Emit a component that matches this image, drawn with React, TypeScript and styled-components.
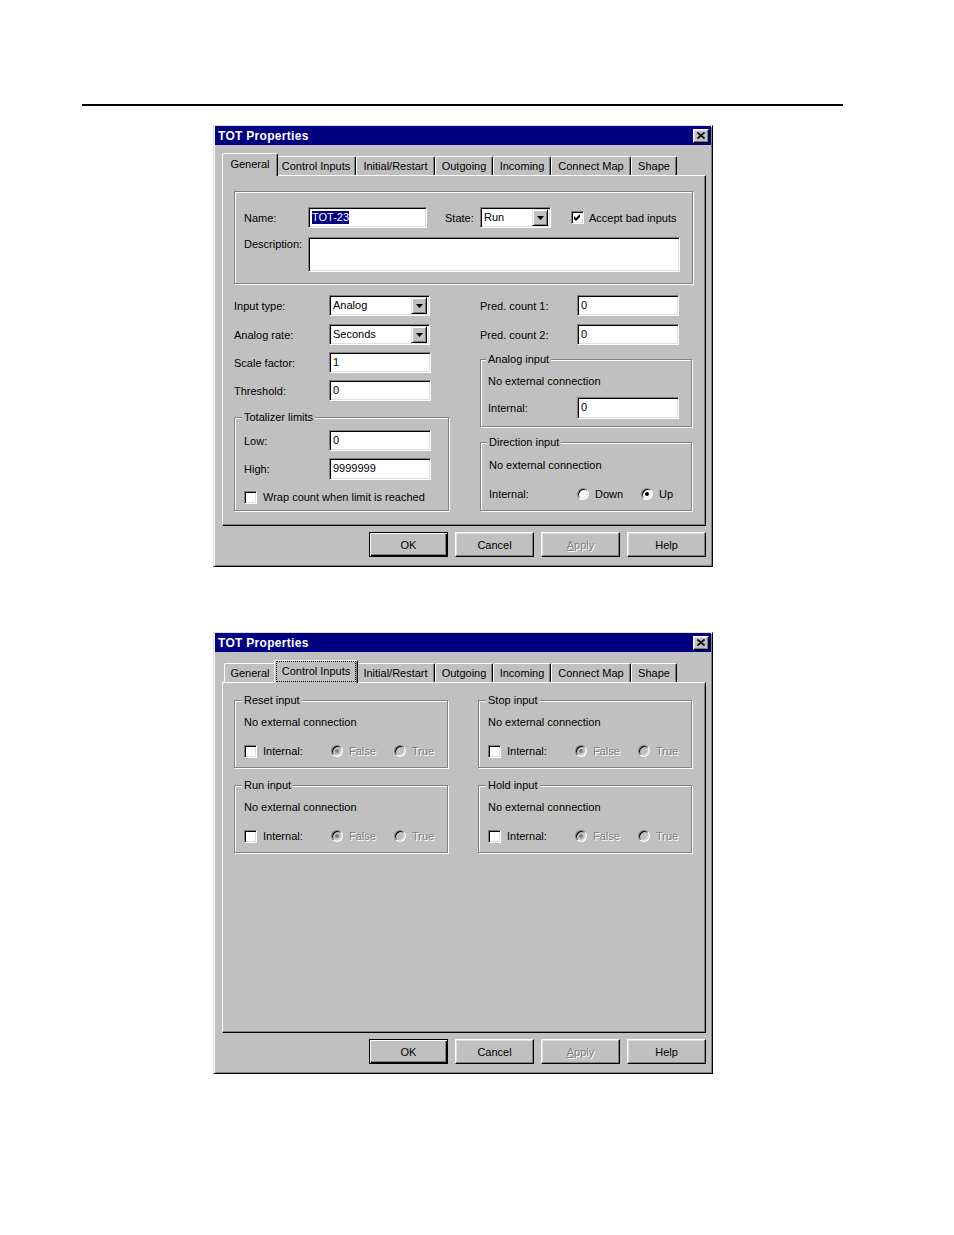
import * as React from 'react';
import styled, { createGlobalStyle } from 'styled-components';

const GlobalStyle = createGlobalStyle`
  html, body {
    margin: 0;
    padding: 0;
    background: #ffffff;
  }
  body {
    font-family: "Liberation Sans", Arial, sans-serif;
  }
`;

const PageElm = styled.div`
  width: 954px;
  min-height: 1235px;
  padding-top: 104px;
  box-sizing: border-box;
`;

const RuleElm = styled.div`
  margin-left: 82px;
  width: 761px;
  height: 2px;
  background: #000;
`;

const SlotElm = styled.div<{ $mt: number }>`
  margin: ${(p) => p.$mt}px 0 0 213px;
`;

// dialog chrome
const FrameElm = styled.div`
  width: 500px;
  height: 442px;
  box-sizing: border-box;
  display: flex;
  flex-direction: column;
  background: #c0c0c0;
  border: 1px solid;
  border-color: #dfdfdf #000 #000 #dfdfdf;
  box-shadow: inset 1px 1px #fff, inset -1px -1px #808080;
  font-size: 11px;
  color: #000;
`;

const TitleBarElm = styled.div`
  height: 19px;
  margin: 0 1px;
  padding: 0 2px 0 3px;
  display: flex;
  align-items: center;
  justify-content: space-between;
  background: #000080;
  color: #fff;
  font-size: 12px;
  font-weight: bold;
  letter-spacing: 0.3px;
`;

const CloseBtnElm = styled.div`
  box-sizing: border-box;
  width: 16px;
  height: 14px;
  display: flex;
  align-items: center;
  justify-content: center;
  background: #c0c0c0;
  border: 1px solid;
  border-color: #fff #000 #000 #fff;
  box-shadow: inset -1px -1px #808080, inset 1px 1px #dfdfdf;
`;

const TabStripElm = styled.div`
  display: flex;
  align-items: flex-end;
  height: 22px;
  margin: 8px 0 0 10px;
`;

const TabElm = styled.div<{ $w: number; $active?: boolean }>`
  position: relative;
  z-index: ${(p) => (p.$active ? 2 : 0)};
  box-sizing: border-box;
  width: ${(p) => p.$w + (p.$active ? 4 : 0)}px;
  height: ${(p) => (p.$active ? 23 : 19)}px;
  margin: 0 ${(p) => (p.$active ? -2 : 0)}px ${(p) => (p.$active ? -1 : 0)}px;
  padding-bottom: ${(p) => (p.$active ? 3 : 0)}px;
  display: flex;
  align-items: center;
  justify-content: center;
  background: #c0c0c0;
  border-top: 1px solid #fff;
  border-left: 1px solid #fff;
  border-right: 1px solid #000;
  border-radius: 2px 2px 0 0;
  box-shadow: inset -1px 0 #808080;
  white-space: nowrap;
`;

const TabFocusElm = styled.span`
  position: absolute;
  inset: 1px 2px 2px 2px;
  outline: 1px dotted #000;
`;

const PanelElm = styled.div<{ $pt: number; $pl: number }>`
  position: relative;
  z-index: 1;
  box-sizing: border-box;
  width: 484px;
  height: 351px;
  margin-left: 8px;
  padding: ${(p) => p.$pt}px 0 0 ${(p) => p.$pl}px;
  border: 1px solid;
  border-color: #fff #000 #000 #fff;
  box-shadow: inset -1px -1px #808080;
`;

const ButtonRowElm = styled.div`
  display: flex;
  justify-content: flex-end;
  gap: 7px;
  width: 484px;
  margin: 6px 0 0 8px;
`;

const ButtonElm = styled.div<{ $default?: boolean; $disabled?: boolean }>`
  box-sizing: border-box;
  width: 79px;
  height: 25px;
  display: flex;
  align-items: center;
  justify-content: center;
  background: #c0c0c0;
  border: 1px solid;
  border-color: ${(p) => (p.$default ? '#000' : '#fff #000 #000 #fff')};
  box-shadow: ${(p) =>
    p.$default
      ? 'inset 1px 1px #fff, inset -1px -1px #000, inset -2px -2px #808080'
      : 'inset -1px -1px #808080, inset 1px 1px #dfdfdf'};
  color: ${(p) => (p.$disabled ? '#808080' : '#000')};
  text-shadow: ${(p) => (p.$disabled ? '1px 1px #fff' : 'none')};
`;

// form parts
const GroupElm = styled.div<{ $h: number; $w?: number; $pt: number; $pl: number; $mt?: number }>`
  position: relative;
  box-sizing: border-box;
  width: ${(p) => (p.$w ? `${p.$w}px` : 'auto')};
  height: ${(p) => p.$h}px;
  margin-top: ${(p) => p.$mt ?? 0}px;
  padding: ${(p) => p.$pt}px 0 0 ${(p) => p.$pl}px;
  border: 1px solid #808080;
  box-shadow: inset 1px 1px #fff, 1px 1px #fff;
`;

const GroupTitleElm = styled.span<{ $left: number }>`
  position: absolute;
  top: -7px;
  left: ${(p) => p.$left}px;
  padding: 0 2px;
  line-height: 13px;
  background: #c0c0c0;
  white-space: nowrap;
`;

const RowElm = styled.div<{ $h?: number; $mt?: number; $top?: boolean }>`
  display: flex;
  align-items: ${(p) => (p.$top ? 'flex-start' : 'center')};
  height: ${(p) => p.$h ?? 22}px;
  margin-top: ${(p) => p.$mt ?? 0}px;
`;

const LabelElm = styled.span<{ $w?: number; $ml?: number; $disabled?: boolean }>`
  flex-shrink: 0;
  width: ${(p) => (p.$w ? `${p.$w}px` : 'auto')};
  margin-left: ${(p) => p.$ml ?? 0}px;
  line-height: 14px;
  white-space: nowrap;
  color: ${(p) => (p.$disabled ? '#808080' : '#000')};
  text-shadow: ${(p) => (p.$disabled ? '1px 1px #fff' : 'none')};
`;

const FieldElm = styled.div<{ $w: number; $h?: number; $top?: boolean }>`
  box-sizing: border-box;
  flex-shrink: 0;
  width: ${(p) => p.$w}px;
  height: ${(p) => p.$h ?? 21}px;
  display: flex;
  align-items: ${(p) => (p.$top ? 'flex-start' : 'center')};
  justify-content: space-between;
  padding: 0 2px 1px 3px;
  background: #fff;
  border: 1px solid;
  border-color: #808080 #fff #fff #808080;
  box-shadow: inset 1px 1px #000, inset -1px -1px #dfdfdf;
  line-height: 13px;
  white-space: nowrap;
  overflow: hidden;
`;

const SelTextElm = styled.span`
  background: #000080;
  color: #fff;
`;

const DropBtnElm = styled.span`
  box-sizing: border-box;
  width: 16px;
  height: 17px;
  margin-top: 1px;
  display: flex;
  align-items: center;
  justify-content: center;
  background: #c0c0c0;
  border: 1px solid;
  border-color: #dfdfdf #000 #000 #dfdfdf;
  box-shadow: inset 1px 1px #fff, inset -1px -1px #808080;
`;

const CheckBoxElm = styled.span<{ $ml?: number }>`
  box-sizing: border-box;
  flex-shrink: 0;
  width: 13px;
  height: 13px;
  margin-left: ${(p) => p.$ml ?? 0}px;
  display: inline-flex;
  align-items: center;
  justify-content: center;
  background: #fff;
  border: 1px solid;
  border-color: #808080 #fff #fff #808080;
  box-shadow: inset 1px 1px #000, inset -1px -1px #dfdfdf;
`;

const RadioElm = styled.span<{ $w?: number }>`
  flex-shrink: 0;
  display: inline-flex;
  align-items: center;
  width: ${(p) => (p.$w ? `${p.$w}px` : 'auto')};
`;

const RadioCircleElm = styled.span<{ $disabled?: boolean }>`
  box-sizing: border-box;
  width: 12px;
  height: 12px;
  margin-right: 6px;
  display: inline-flex;
  align-items: center;
  justify-content: center;
  border-radius: 50%;
  background: ${(p) => (p.$disabled ? '#c0c0c0' : '#fff')};
  border: 1px solid;
  border-color: #808080 #fff #fff #808080;
  box-shadow: inset 1px 1px #000, inset -1px -1px #dfdfdf;
`;

const RadioDotElm = styled.span<{ $disabled?: boolean }>`
  width: 4px;
  height: 4px;
  border-radius: 50%;
  background: ${(p) => (p.$disabled ? '#808080' : '#000')};
`;

const ColumnsElm = styled.div<{ $mt: number; $gap: number }>`
  display: flex;
  gap: ${(p) => p.$gap}px;
  margin-top: ${(p) => p.$mt}px;
`;

const ColumnElm = styled.div<{ $w: number }>`
  display: flex;
  flex-direction: column;
  width: ${(p) => p.$w}px;
`;

const GridElm = styled.div`
  display: grid;
  grid-template-columns: 214px 214px;
  column-gap: 30px;
  row-gap: 17px;
`;

// small pieces
const CheckMark = () => (
  <svg width="7" height="7" viewBox="0 0 7 7">
    <polygon points="0,2 2,4 6,0 6,3 2,7 0,5" fill="#000" />
  </svg>
);

const Combo = ({ w, value }: { w: number; value: string }) => (
  <FieldElm $w={w}>
    <span>{value}</span>
    <DropBtnElm>
      <svg width="7" height="4" viewBox="0 0 7 4">
        <polygon points="0,0 7,0 3.5,4" fill="#000" />
      </svg>
    </DropBtnElm>
  </FieldElm>
);

const Radio = ({
  label,
  checked,
  disabled,
  w,
}: {
  label: string;
  checked?: boolean;
  disabled?: boolean;
  w?: number;
}) => (
  <RadioElm $w={w}>
    <RadioCircleElm $disabled={disabled}>
      {checked && <RadioDotElm $disabled={disabled} />}
    </RadioCircleElm>
    <LabelElm $disabled={disabled}>{label}</LabelElm>
  </RadioElm>
);

interface ITabDef {
  id: string;
  label: string;
  width: number;
}

const TABS: ITabDef[] = [
  { id: 'general', label: 'General', width: 52 },
  { id: 'control', label: 'Control Inputs', width: 80 },
  { id: 'initial', label: 'Initial/Restart', width: 79 },
  { id: 'outgoing', label: 'Outgoing', width: 58 },
  { id: 'incoming', label: 'Incoming', width: 58 },
  { id: 'connect', label: 'Connect Map', width: 80 },
  { id: 'shape', label: 'Shape', width: 46 },
];

interface IDialogProps {
  activeTab: string;
  focused?: boolean;
  padTop: number;
  children: React.ReactNode;
}

const Dialog = ({ activeTab, focused, padTop, children }: IDialogProps) => (
  <FrameElm>
    <TitleBarElm>
      <span>TOT Properties</span>
      <CloseBtnElm>
        <svg width="8" height="7" viewBox="0 0 8 7">
          <path d="M0.5 0.5L7.5 6.5M7.5 0.5L0.5 6.5" stroke="#000" strokeWidth="1.6" />
        </svg>
      </CloseBtnElm>
    </TitleBarElm>
    <TabStripElm>
      {TABS.map((tab) => (
        <TabElm key={tab.id} $w={tab.width} $active={tab.id === activeTab}>
          {tab.label}
          {focused && tab.id === activeTab && <TabFocusElm />}
        </TabElm>
      ))}
    </TabStripElm>
    <PanelElm $pt={padTop} $pl={11}>
      {children}
    </PanelElm>
    <ButtonRowElm>
      <ButtonElm $default>OK</ButtonElm>
      <ButtonElm>Cancel</ButtonElm>
      <ButtonElm $disabled>
        <span>
          <u>A</u>pply
        </span>
      </ButtonElm>
      <ButtonElm>Help</ButtonElm>
    </ButtonRowElm>
  </FrameElm>
);

const GeneralView = () => (
  <>
    <GroupElm $w={459} $h={93} $pt={15} $pl={9}>
      <RowElm $h={21}>
        <LabelElm $w={64}>Name:</LabelElm>
        <FieldElm $w={119}>
          <SelTextElm>TOT-23</SelTextElm>
        </FieldElm>
        <LabelElm $w={35} $ml={18}>
          State:
        </LabelElm>
        <Combo w={71} value="Run" />
        <CheckBoxElm $ml={20}>
          <CheckMark />
        </CheckBoxElm>
        <LabelElm $ml={5}>Accept bad inputs</LabelElm>
      </RowElm>
      <RowElm $h={35} $mt={9} $top>
        <LabelElm $w={64}>Description:</LabelElm>
        <FieldElm $w={372} $h={35} $top />
      </RowElm>
    </GroupElm>

    <ColumnsElm $mt={11} $gap={31}>
      <ColumnElm $w={215}>
        <RowElm $h={21}>
          <LabelElm $w={95}>Input type:</LabelElm>
          <Combo w={101} value="Analog" />
        </RowElm>
        <RowElm $h={21} $mt={8}>
          <LabelElm $w={95}>Analog rate:</LabelElm>
          <Combo w={101} value="Seconds" />
        </RowElm>
        <RowElm $h={21} $mt={7}>
          <LabelElm $w={95}>Scale factor:</LabelElm>
          <FieldElm $w={102}>1</FieldElm>
        </RowElm>
        <RowElm $h={21} $mt={7}>
          <LabelElm $w={95}>Threshold:</LabelElm>
          <FieldElm $w={102}>0</FieldElm>
        </RowElm>
        <GroupElm $mt={16} $h={94} $pt={12} $pl={9}>
          <GroupTitleElm $left={7}>Totalizer limits</GroupTitleElm>
          <RowElm $h={21}>
            <LabelElm $w={85}>Low:</LabelElm>
            <FieldElm $w={102}>0</FieldElm>
          </RowElm>
          <RowElm $mt={7}>
            <LabelElm $w={85}>High:</LabelElm>
            <FieldElm $w={102} $h={22}>
              9999999
            </FieldElm>
          </RowElm>
          <RowElm $mt={6}>
            <CheckBoxElm />
            <LabelElm $ml={6}>Wrap count when limit is reached</LabelElm>
          </RowElm>
        </GroupElm>
      </ColumnElm>

      <ColumnElm $w={212}>
        <RowElm $h={21}>
          <LabelElm $w={97}>Pred. count 1:</LabelElm>
          <FieldElm $w={102}>0</FieldElm>
        </RowElm>
        <RowElm $h={21} $mt={8}>
          <LabelElm $w={97}>Pred. count 2:</LabelElm>
          <FieldElm $w={102}>0</FieldElm>
        </RowElm>
        <GroupElm $mt={14} $h={68} $pt={10} $pl={7}>
          <GroupTitleElm $left={5}>Analog input</GroupTitleElm>
          <RowElm>
            <LabelElm>No external connection</LabelElm>
          </RowElm>
          <RowElm $mt={5}>
            <LabelElm $w={89}>Internal:</LabelElm>
            <FieldElm $w={102} $h={22}>
              0
            </FieldElm>
          </RowElm>
        </GroupElm>
        <GroupElm $mt={15} $h={69} $pt={11} $pl={8}>
          <GroupTitleElm $left={6}>Direction input</GroupTitleElm>
          <RowElm>
            <LabelElm>No external connection</LabelElm>
          </RowElm>
          <RowElm $mt={7}>
            <LabelElm $w={88}>Internal:</LabelElm>
            <Radio label="Down" w={64} />
            <Radio label="Up" checked />
          </RowElm>
        </GroupElm>
      </ColumnElm>
    </ColumnsElm>
  </>
);

const ControlGroup = ({ title }: { title: string }) => (
  <GroupElm $h={68} $pt={10} $pl={9}>
    <GroupTitleElm $left={7}>{title}</GroupTitleElm>
    <RowElm>
      <LabelElm>No external connection</LabelElm>
    </RowElm>
    <RowElm $mt={7}>
      <CheckBoxElm />
      <LabelElm $w={68} $ml={6}>
        Internal:
      </LabelElm>
      <Radio label="False" checked disabled w={63} />
      <Radio label="True" disabled />
    </RowElm>
  </GroupElm>
);

const ControlInputsView = () => (
  <GridElm>
    <ControlGroup title="Reset input" />
    <ControlGroup title="Stop input" />
    <ControlGroup title="Run input" />
    <ControlGroup title="Hold input" />
  </GridElm>
);

const App = () => (
  <>
    <GlobalStyle />
    <PageElm>
      <RuleElm />
      <SlotElm $mt={19}>
        <Dialog activeTab="general" padTop={15}>
          <GeneralView />
        </Dialog>
      </SlotElm>
      <SlotElm $mt={65}>
        <Dialog activeTab="control" focused padTop={17}>
          <ControlInputsView />
        </Dialog>
      </SlotElm>
    </PageElm>
  </>
);

export default App;
